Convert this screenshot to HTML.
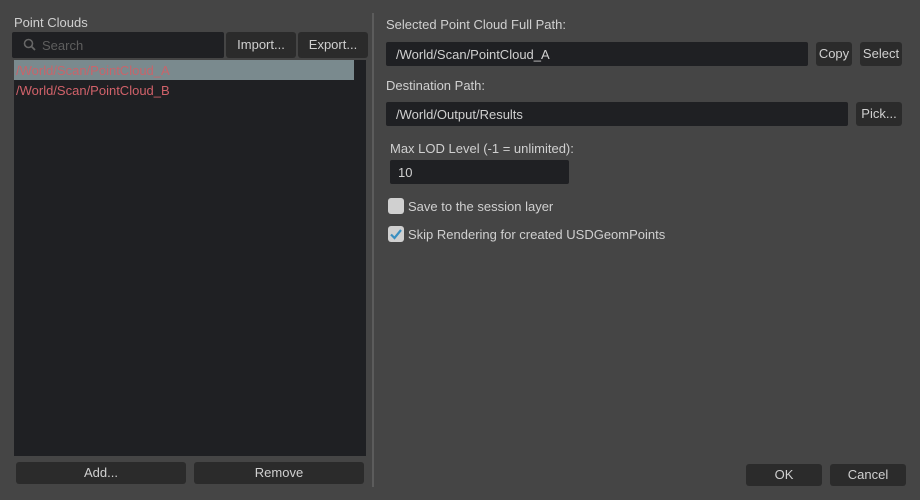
<!DOCTYPE html>
<html><head><style>
body{margin:0;width:920px;height:500px;background:#454545;font-family:"Liberation Sans","DejaVu Sans",sans-serif;font-size:13px;color:#d0d0d0;position:relative;overflow:hidden}
div{position:absolute;box-sizing:border-box}
.f{background:#1f2023;border-radius:2px}
.b{background:#2b2b2b;border-radius:3px;text-align:center;color:#d0d0d0}
.l{white-space:nowrap}
</style></head><body>
<div class="l" style="left:14px;top:15px">Point Clouds</div>
<div class="f" style="left:12px;top:32px;width:212px;height:26px"></div>
<svg style="position:absolute;left:23px;top:38px" width="14" height="14" viewBox="0 0 14 14"><circle cx="5.5" cy="5.5" r="4" fill="none" stroke="#666" stroke-width="1.6"/><line x1="8.5" y1="8.5" x2="12" y2="12" stroke="#666" stroke-width="1.8"/></svg>
<div class="l" style="left:42px;top:38px;color:#5e5e5e">Search</div>
<div class="b" style="left:226px;top:32px;width:70px;height:26px;line-height:26px">Import...</div>
<div class="b" style="left:298px;top:32px;width:70px;height:26px;line-height:26px">Export...</div>
<div class="f" style="left:14px;top:60px;width:352px;height:396px;border-radius:0"></div>
<div style="left:14px;top:60px;width:340px;height:20px;background:#7a8a8e"></div>
<div class="l" style="left:16px;top:63px;color:#c8646a">/World/Scan/PointCloud_A</div>
<div class="l" style="left:16px;top:83px;color:#d0626a">/World/Scan/PointCloud_B</div>
<div class="b" style="left:16px;top:462px;width:170px;height:22px;line-height:22px">Add...</div>
<div class="b" style="left:194px;top:462px;width:170px;height:22px;line-height:22px">Remove</div>
<div style="left:372px;top:13px;width:2px;height:474px;background:#5c5c5c"></div>
<div class="l" style="left:386px;top:17px">Selected Point Cloud Full Path:</div>
<div class="f" style="left:386px;top:42px;width:422px;height:24px"></div>
<div class="l" style="left:396px;top:47px">/World/Scan/PointCloud_A</div>
<div class="b" style="left:816px;top:42px;width:36px;height:24px;line-height:24px">Copy</div>
<div class="b" style="left:860px;top:42px;width:42px;height:24px;line-height:24px">Select</div>
<div class="l" style="left:386px;top:78px">Destination Path:</div>
<div class="f" style="left:386px;top:102px;width:462px;height:24px"></div>
<div class="l" style="left:396px;top:107px">/World/Output/Results</div>
<div class="b" style="left:856px;top:102px;width:46px;height:24px;line-height:24px">Pick...</div>
<div class="l" style="left:390px;top:141px">Max LOD Level (-1 = unlimited):</div>
<div class="f" style="left:390px;top:160px;width:179px;height:24px"></div>
<div class="l" style="left:398px;top:165px">10</div>
<div style="left:388px;top:198px;width:16px;height:16px;background:#d0d0d0;border-radius:3px"></div>
<div class="l" style="left:408px;top:199px">Save to the session layer</div>
<div style="left:388px;top:226px;width:16px;height:16px;background:#d0d0d0;border-radius:3px"></div>
<svg style="position:absolute;left:388px;top:226px" width="16" height="16"><path d="M3 8.5 L6.5 12 L13 4" fill="none" stroke="#3a8fc0" stroke-width="2.2"/></svg>
<div class="l" style="left:408px;top:227px">Skip Rendering for created USDGeomPoints</div>
<div class="b" style="left:746px;top:464px;width:76px;height:22px;line-height:22px">OK</div>
<div class="b" style="left:830px;top:464px;width:76px;height:22px;line-height:22px">Cancel</div>
</body></html>
